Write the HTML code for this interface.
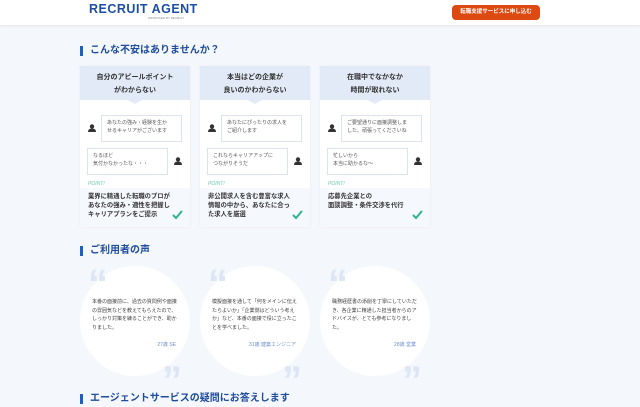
<!DOCTYPE html><html><head><meta charset="utf-8"><style>
*{margin:0;padding:0;box-sizing:border-box}
body{width:640px;height:407px;overflow:hidden;background:#f4f7fc;font-family:"Liberation Sans","Noto Sans CJK JP",sans-serif;position:relative;color:#333}
.hdr{position:absolute;left:0;top:0;width:640px;height:25px;background:#fff;box-shadow:0 1px 3px rgba(0,0,0,.08)}
.logo{position:absolute;left:89px;top:2px;font-size:12.5px;font-weight:bold;color:#1d4ea6;letter-spacing:.5px}
.sub{position:absolute;left:148px;top:16px;font-size:3px;color:#888}
.btn{position:absolute;left:452px;top:5px;width:88px;height:15px;background:#dc4a12;border-radius:4px;color:#fff;font-size:5.5px;font-weight:bold;text-align:center;line-height:15px}
.h{position:absolute;left:80px;font-size:10px;font-weight:bold;color:#1f4d9e;padding-left:7px;border-left:3px solid #1f5fc4;line-height:10px}
.card{position:absolute;top:66px;width:110px;height:161px;background:#fff;box-shadow:0 0 2px rgba(0,0,0,.06)}
.ch{height:34px;background:#e2eaf7;text-align:center;font-size:7px;font-weight:bold;line-height:13px;padding-top:5px;color:#333;position:relative}
.ch:after{content:"";position:absolute;left:48px;bottom:-4px;border:7px solid transparent;border-top:4px solid #e2eaf7;border-bottom:0}
.b{position:absolute;border:1px solid #dde3ec;background:#fff;font-size:5px;line-height:8px;padding:3px 5px;color:#555;width:81px;height:27px}
.u{position:absolute;width:8px;height:8px}
.pt{position:absolute;left:8px;top:115px;font-size:5px;color:#6ccab0;font-style:italic}
.pa{position:absolute;left:0;top:122px;width:110px;height:39px;background:#f5f8fd;font-size:6.3px;font-weight:bold;line-height:9px;padding:4px 8px;color:#333}
.ck{position:absolute;right:7px;bottom:7px}
.cir{position:absolute;top:266px;width:110px;height:110px;border-radius:50%;background:#fff}
.q{position:absolute;font-size:40px;font-weight:bold;color:#dde6f4;font-family:"Liberation Sans",sans-serif;line-height:40px}
.ct{position:absolute;left:12px;top:32px;width:86px;font-size:5px;line-height:8.5px;color:#444}
.ag{position:absolute;right:14px;top:75px;font-size:5px;color:#6b8fd0}
</style></head><body>
<div class="hdr"><div class="logo">RECRUIT AGENT</div><div class="sub">PRODUCED BY RECRUIT</div><div class="btn">転職支援サービスに申し込む</div></div>
<div class="h" style="top:46px">こんな不安はありませんか？</div>

<svg width="0" height="0" style="position:absolute"><defs><g id="usr"><circle cx="4" cy="2.5" r="2.2" fill="#333"/><path d="M0 8 Q0 4.5 4 4.5 Q8 4.5 8 8Z" fill="#333"/></g><g id="chk"><path d="M1 5 L4 8 L10 1" stroke="#2fb392" stroke-width="2" fill="none"/></g></defs></svg>

<div class="card" style="left:80px"><div class="ch">自分のアピールポイント<br>がわからない</div>
<div class="b" style="left:21px;top:49px">あなたの強み・経験を生か<br>せるキャリアがございます</div><svg class="u" style="left:8px;top:58px"><use href="#usr"/></svg>
<div class="b" style="left:7px;top:82px">なるほど<br>気付かなかったな・・・</div><svg class="u" style="left:94px;top:91px"><use href="#usr"/></svg>
<div class="pt">POINT!</div><div class="pa">業界に精通した転職のプロが<br>あなたの強み・適性を把握し<br>キャリアプランをご提示<svg class="ck" width="11" height="10"><use href="#chk"/></svg></div></div>

<div class="card" style="left:200px"><div class="ch">本当はどの企業が<br>良いのかわからない</div>
<div class="b" style="left:21px;top:49px">あなたにぴったりの求人を<br>ご紹介します</div><svg class="u" style="left:8px;top:58px"><use href="#usr"/></svg>
<div class="b" style="left:7px;top:82px">これならキャリアアップに<br>つながりそうだ</div><svg class="u" style="left:94px;top:91px"><use href="#usr"/></svg>
<div class="pt">POINT!</div><div class="pa">非公開求人を含む豊富な求人<br>情報の中から、あなたに合っ<br>た求人を厳選<svg class="ck" width="11" height="10"><use href="#chk"/></svg></div></div>

<div class="card" style="left:320px"><div class="ch">在職中でなかなか<br>時間が取れない</div>
<div class="b" style="left:21px;top:49px">ご要望通りに面接調整しま<br>した。頑張ってくださいね</div><svg class="u" style="left:8px;top:58px"><use href="#usr"/></svg>
<div class="b" style="left:7px;top:82px">忙しいから<br>本当に助かるな～</div><svg class="u" style="left:94px;top:91px"><use href="#usr"/></svg>
<div class="pt">POINT!</div><div class="pa">応募先企業との<br>面談調整・条件交渉を代行<svg class="ck" width="11" height="10"><use href="#chk"/></svg></div></div>

<div class="h" style="top:246px">ご利用者の声</div>

<div class="cir" style="left:80px"><div class="ct">本番の面接前に、過去の質問例や面接の雰囲気などを教えてもらえたので、しっかり対策を練ることができ、助かりました。</div><div class="ag">27歳 SE</div></div>
<div class="cir" style="left:200px"><div class="ct">模擬面接を通して「何をメインに伝えたらよいか」「企業側はどういう考えか」など、本番の面接で役に立ったことを学べました。</div><div class="ag">31歳 建築エンジニア</div></div>
<div class="cir" style="left:320px"><div class="ct">職務経歴書の添削を丁寧にしていただき、各企業に精通した担当者からのアドバイスが、とても参考になりました。</div><div class="ag">28歳 営業</div></div>
<div class="q" style="left:88px;top:264px">“</div><div class="q" style="left:208px;top:264px">“</div><div class="q" style="left:328px;top:264px">“</div>
<div class="q" style="left:162px;top:361px">”</div><div class="q" style="left:282px;top:361px">”</div><div class="q" style="left:402px;top:361px">”</div>

<div class="h" style="top:394px">エージェントサービスの疑問にお答えします</div>
</body></html>
